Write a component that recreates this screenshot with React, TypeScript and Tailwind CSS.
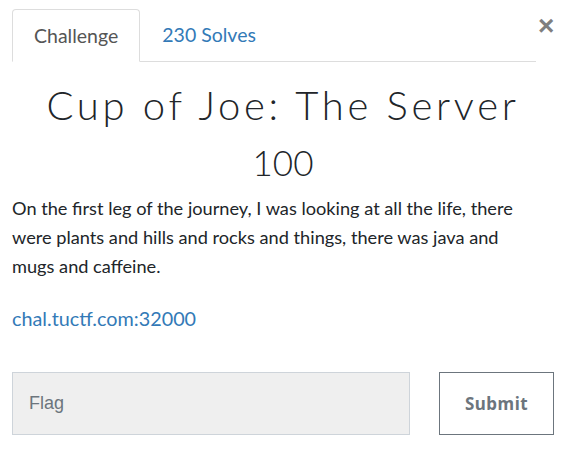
import React from "react";

export default function App() {
  return (
    <div className="w-[568px] h-[454px] bg-white overflow-hidden" style={{ fontFamily: "Lato, 'Noto Sans', sans-serif" }}>
      <div className="flex items-start pl-[12px] pt-[9px]">
        <div className="flex w-[524px] border-b border-[#dddddd] h-[53px]">
          <div className="h-[53px] -mb-px px-[21px] border border-[#dddddd] border-b-white rounded-t-[4px] bg-white flex items-center text-[19.5px] text-[#555555]">
            Challenge
          </div>
          <div className="h-[52px] px-[22px] flex items-center text-[19.5px] text-[#337ab7]">230 Solves</div>
        </div>
        <div className="ml-[2px] mt-[3px] text-[28px] font-bold text-[#7f7f7f] leading-none" style={{ fontFamily: "'Liberation Sans', Arial, sans-serif" }}>
          ×
        </div>
      </div>
      <div className="px-[12px] w-[566px]">
        <h1 className="mt-[13px] text-center text-[40px] font-light leading-[60px] tracking-[3.7px] text-[#212529]">
          Cup of Joe: The Server
        </h1>
        <div className="mt-[3px] text-center text-[35px] font-light leading-[48px] text-[#212529]">100</div>
        <p className="mt-[8px] w-[515px] text-[18.2px] leading-[28.8px] text-[#212529]">
          On the first leg of the journey, I was looking at all the life, there were plants and hills and rocks and things, there was java and mugs and caffeine.
        </p>
        <p className="mt-[24px] text-[19.8px] leading-[28.8px] text-[#337ab7]">chal.tuctf.com:32000</p>
        <div className="mt-[39px] flex justify-between">
          <div
            className="w-[398px] h-[63px] bg-[#efefef] border border-[#ced4da] flex items-center pl-[16px] text-[18px] text-[#6c757d]"
            style={{ fontFamily: "'Liberation Sans', Arial, sans-serif" }}
          >
            Flag
          </div>
          <div
            className="w-[115px] h-[63px] border border-[#6c757d] flex items-center justify-center text-[17px] font-bold text-[#6c757d] tracking-[0.5px]"
            style={{ fontFamily: "'Noto Sans', sans-serif" }}
          >
            Submit
          </div>
        </div>
      </div>
    </div>
  );
}
